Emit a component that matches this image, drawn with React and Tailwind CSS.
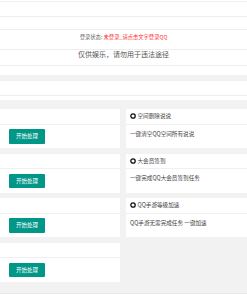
import React from "react";

const font = { fontFamily: '"Noto Sans CJK SC", "Noto Sans", sans-serif' };

function Ring() {
  return (
    <svg width="6" height="6" viewBox="0 0 6 6" className="shrink-0">
      <circle cx="3" cy="3" r="2.2" fill="none" stroke="#111" strokeWidth="1.3" />
    </svg>
  );
}

function LeftCard() {
  return (
    <div className="h-[39px] bg-white flex flex-col">
      <div className="h-[15.5px] border-b border-[#f0f0f0]" />
      <div className="pt-[4.5px] pl-[9px]">
        <div className="w-[36px] h-[14.5px] bg-[#009688] text-white text-[5.5px] leading-[14.5px] text-center rounded-[1px]">
          开始处理
        </div>
      </div>
    </div>
  );
}

function RightCard({ title, desc }) {
  return (
    <div className="h-[39px] bg-white flex flex-col">
      <div className="h-[15.5px] border-b border-[#f0f0f0] flex items-center pl-[4px] gap-[1.5px]">
        <Ring />
        <span className="text-[5.6px] leading-[8px] text-[#444]">{title}</span>
      </div>
      <div className="pl-[4px] pt-[5px] text-[5.6px] leading-[8px] text-[#444]">{desc}</div>
    </div>
  );
}

export default function App() {
  return (
    <div className="w-[247px] h-[296px] overflow-hidden bg-[#f2f2f2] flex flex-col" style={font}>
      <div className="bg-white h-[75px] flex flex-col shrink-0">
        <div className="h-[2px] border-b border-[#f3f3f3]" />
        <div className="h-[15px] border-b border-[#eeeeee]" />
        <div className="h-[13px] border-b border-[#eeeeee]" />
        <div className="h-[20px] border-b border-[#eeeeee] pt-[3.5px] text-center text-[5.3px] leading-[7px]">
          <span className="text-[#666]">登录状态: </span>
          <span className="text-[#ff2a2a]">未登录_请点击文字登录QQ</span>
        </div>
        <div className="h-[16px] border-b border-[#eeeeee] text-center text-[7px] leading-[9px] text-[#555]">
          仅供娱乐，请勿用于违法途径
        </div>
      </div>
      <div className="mt-[6px] bg-white h-[19px] shrink-0 flex flex-col">
        <div className="h-[15px] border-b border-[#eeeeee]" />
      </div>
      <div className="mt-[9px] flex gap-[6px] shrink-0">
        <div className="w-[120px] flex flex-col gap-[5.6px]">
          <LeftCard />
          <LeftCard />
          <LeftCard />
          <LeftCard />
        </div>
        <div className="flex-1 flex flex-col gap-[5.6px]">
          <RightCard title="空间删除说说" desc="一键清空QQ空间所有说说" />
          <RightCard title="大会员签到" desc="一键完成QQ大会员签到任务" />
          <RightCard title="QQ手游等级加速" desc="QQ手游无需完成任务 一键加速" />
        </div>
      </div>
      <div className="mt-[11px] flex-1 bg-white border-t border-[#e8e8e8]" />
    </div>
  );
}
